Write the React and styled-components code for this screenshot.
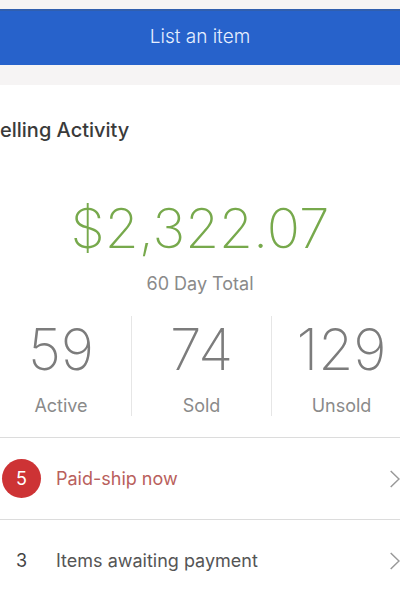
import React from "react";
import styled, { createGlobalStyle } from "styled-components";

const stats = [
  { value: "59", label: "Active" },
  { value: "74", label: "Sold" },
  { value: "129", label: "Unsold" },
];

const tasks = [
  { count: 5, label: "Paid-ship now", urgent: true },
  { count: 3, label: "Items awaiting payment", urgent: false },
];

const Chevron = () => (
  <svg width="10" height="18" viewBox="0 0 10 18" fill="none" aria-hidden="true">
    <path d="M.7 1l8.3 8-8.3 8" stroke="#999" strokeWidth="1.5" />
  </svg>
);

const App = () => {
  return (
    <Page>
      <GlobalStyle />
      <TopBar>
        <ListButton type="button">List an item</ListButton>
      </TopBar>
      <Title>elling Activity</Title>
      <Total>
        <Amount>$2,322.07</Amount>
        <Caption>60 Day Total</Caption>
      </Total>
      <Stats>
        {stats.map((stat) => (
          <Stat key={stat.label}>
            <StatValue>{stat.value}</StatValue>
            <Caption>{stat.label}</Caption>
          </Stat>
        ))}
      </Stats>
      <TaskList>
        {tasks.map((task) => (
          <li key={task.label}>
            <TaskLink href="#" $urgent={task.urgent}>
              <Count $urgent={task.urgent}>{task.count}</Count>
              <TaskLabel>{task.label}</TaskLabel>
              <Chevron />
            </TaskLink>
          </li>
        ))}
      </TaskList>
    </Page>
  );
};

export default App;

const GlobalStyle = createGlobalStyle`
  * {
    box-sizing: border-box;
  }
  body {
    margin: 0;
    background: #fff;
    font-family: Inter, "Liberation Sans", sans-serif;
  }
`;

const Page = styled.main`
  overflow: hidden;
`;

const TopBar = styled.div`
  padding: 9px 0 20px;
  background: #f6f4f4;
`;

const ListButton = styled.button`
  display: block;
  width: 100%;
  height: 56px;
  padding: 0 0 3px;
  border: none;
  border-top: 2px solid #315fae;
  background: #2762cb;
  color: #e6efff;
  font-family: inherit;
  font-size: 19px;
  font-weight: 300;
`;

const Title = styled.h1`
  margin: 32px 0 0;
  color: #3a3a3a;
  font-size: 20px;
  font-weight: 500;
  line-height: 26px;
`;

const Total = styled.section`
  margin-top: 53px;
  text-align: center;
`;

const Amount = styled.div`
  margin-bottom: 12px;
  color: #77a94c;
  font-size: 55px;
  font-weight: 200;
  line-height: 64px;
`;

const Caption = styled.div`
  color: #8a8a8a;
  font-size: 18px;
  line-height: 24px;
`;

const Stats = styled.section`
  display: grid;
  grid-template-columns: 1fr 1fr 1fr;
  margin: 20px -11px 0 -9px;
  padding-bottom: 21px;
`;

const Stat = styled.div`
  padding-top: 2px;
  height: 100px;
  text-align: center;

  & + & {
    border-left: 1px solid #e6e6e6;
  }
`;

const StatValue = styled.div`
  margin-bottom: 12px;
  color: #7c7c7c;
  font-size: 57px;
  font-weight: 200;
  line-height: 64px;
`;

const TaskList = styled.ul`
  margin: 0;
  padding: 0;
  list-style: none;
`;

const TaskLink = styled.a`
  display: flex;
  align-items: center;
  height: 82px;
  padding-left: 2px;
  border-top: 1px solid #dcdcdc;
  color: ${(props) => (props.$urgent ? "#b9605c" : "#555")};
  font-size: 18px;
  text-decoration: none;
`;

const Count = styled.span`
  display: flex;
  align-items: center;
  justify-content: center;
  width: 39px;
  height: 39px;
  border-radius: 50%;
  background: ${(props) => (props.$urgent ? "#cd3335" : "transparent")};
  color: ${(props) => (props.$urgent ? "#fff" : "#444")};
`;

const TaskLabel = styled.span`
  flex: 1;
  margin-left: 15px;
`;
